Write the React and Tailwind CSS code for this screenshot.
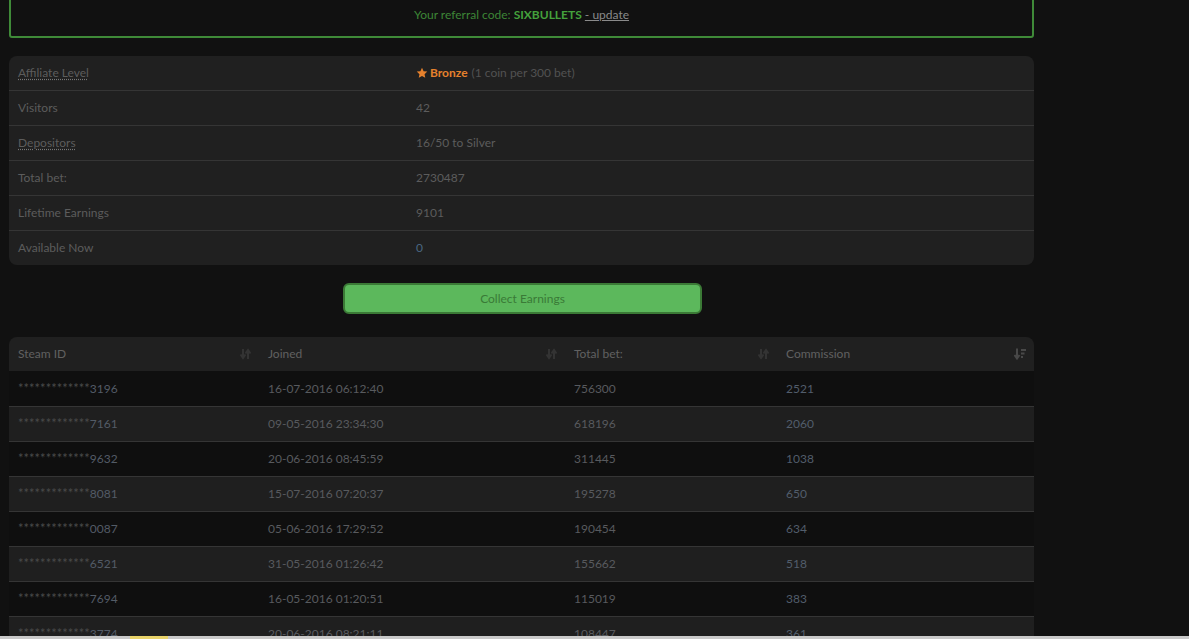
import React from "react"

const stats = [
  { label: "Affiliate Level", abbr: true, value: "bronze" },
  { label: "Visitors", value: "42" },
  { label: "Depositors", abbr: true, value: "16/50 to Silver" },
  { label: "Total bet:", value: "2730487" },
  { label: "Lifetime Earnings", value: "9101" },
  { label: "Available Now", value: "0", blue: true },
]

const rows = [
  ["3196", "16-07-2016 06:12:40", "756300", "2521"],
  ["7161", "09-05-2016 23:34:30", "618196", "2060"],
  ["9632", "20-06-2016 08:45:59", "311445", "1038"],
  ["8081", "15-07-2016 07:20:37", "195278", "650"],
  ["0087", "05-06-2016 17:29:52", "190454", "634"],
  ["6521", "31-05-2016 01:26:42", "155662", "518"],
  ["7694", "16-05-2016 01:20:51", "115019", "383"],
  ["3774", "20-06-2016 08:21:11", "108447", "361"],
]

function SortBoth() {
  return (
    <svg width="11" height="12" viewBox="0 0 11 12" className="text-[#333333]">
      <path d="M3 1v8M0.5 6.5L3 10l2.5-3.5" stroke="currentColor" strokeWidth="2" fill="none" />
      <path d="M8 11V3M5.5 5.5L8 2l2.5 3.5" stroke="currentColor" strokeWidth="2" fill="none" />
    </svg>
  )
}

function SortDesc() {
  return (
    <svg width="12" height="12" viewBox="0 0 12 12" className="text-[#484848]">
      <path d="M3 0.5v9M0.5 7L3 10.5 5.5 7" stroke="currentColor" strokeWidth="2" fill="none" />
      <rect x="7" y="1" width="5" height="2" fill="currentColor" />
      <rect x="7" y="4.5" width="3.5" height="2" fill="currentColor" />
      <rect x="7" y="8" width="2" height="2" fill="currentColor" />
    </svg>
  )
}

const cols = ["w-[250px]", "w-[306px]", "w-[212px]", "flex-1"]

export default function App() {
  return (
    <div
      className="h-[639px] overflow-hidden bg-[#111111] flex flex-col text-[12px]"
      style={{ fontFamily: "Lato, 'Open Sans', sans-serif" }}
    >
      <div className="flex-1 overflow-hidden">
        <div className="w-[1025px] ml-[9px]">
          {/* referral box */}
          <div className="-mt-[14px] h-[52px] border-2 border-[#3f8a38] rounded-[3px] flex items-end justify-center pb-[12px] text-[#3d8636]">
            <span>
              Your referral code: <b className="font-bold text-[#44a13c]">SIXBULLETS</b>{" "}
              <span className="underline text-[#8a8a8a]">- update</span>
            </span>
          </div>

          {/* stats */}
          <div className="mt-[18px] bg-[#202020] rounded-[8px]">
            {stats.map((s, i) => (
              <div
                key={s.label}
                className={`flex items-center ${i > 0 ? "h-[35px] border-t border-[#353535]" : "h-[34px]"}`}
              >
                <div className="w-[407px] pl-[9px] text-[#5c5c5c]">
                  {s.abbr ? (
                    <span className="underline decoration-dotted decoration-[#777] underline-offset-2">{s.label}</span>
                  ) : (
                    s.label
                  )}
                </div>
                <div className={s.blue ? "text-[#4a6680]" : "text-[#5c5c5c]"}>
                  {s.value === "bronze" ? (
                    <span className="flex items-center">
                      <svg width="12" height="12" viewBox="0 0 24 24" className="mr-[2px]">
                        <path
                          fill="#e5812d"
                          d="M12 1.5l3.2 6.8 7.3.9-5.4 5.1 1.4 7.3L12 18l-6.5 3.6 1.4-7.3L1.5 9.2l7.3-.9z"
                        />
                      </svg>
                      <b className="font-bold text-[#e5812d]">Bronze</b>
                      <span className="ml-[4px] text-[#525252]">(1 coin per 300 bet)</span>
                    </span>
                  ) : (
                    s.value
                  )}
                </div>
              </div>
            ))}
          </div>

          {/* collect button */}
          <div className="flex justify-center mt-[18px] pl-[2px]">
            <button className="w-[359px] h-[31px] bg-[#5cb85c] border-2 border-[#3b7a36] rounded-[6px] text-[#3a7a37] text-[12px]">
              Collect Earnings
            </button>
          </div>

          {/* table */}
          <div className="mt-[23px]">
            <div className="flex h-[34px] items-center bg-[#202020] rounded-t-[8px] text-[#616161]">
              {["Steam ID", "Joined", "Total bet:", "Commission"].map((h, i) => (
                <div key={h} className={`${cols[i]} flex items-center justify-between pl-[9px] pr-[8px]`}>
                  <span>{h}</span>
                  {i === 3 ? <SortDesc /> : <SortBoth />}
                </div>
              ))}
            </div>
            {rows.map((r, i) => (
              <div
                key={r[0]}
                className={`flex h-[35px] items-center ${i > 0 ? "border-t border-[#353535]" : ""} ${
                  i % 2 === 0 ? "bg-[#0f0f0f]" : "bg-[#1f1f1f]"
                }`}
              >
                <div className={`${cols[0]} pl-[9px]`}>
                  <span className="text-[#4a4a4a] text-[13px]">*************</span>
                  <span className="text-[#535b66]">{r[0]}</span>
                </div>
                <div className={`${cols[1]} pl-[9px] text-[#585a5e]`}>{r[1]}</div>
                <div className={`${cols[2]} pl-[9px] text-[#585a5e]`}>{r[2]}</div>
                <div className={`${cols[3]} pl-[9px] text-[#525d6b]`}>{r[3]}</div>
              </div>
            ))}
          </div>
        </div>
      </div>
      <div className="h-[3px] bg-[#c9c9c9] flex">
        <div className="w-[130px]" />
        <div className="w-[38px] bg-[#e8d36a]" />
      </div>
    </div>
  )
}
